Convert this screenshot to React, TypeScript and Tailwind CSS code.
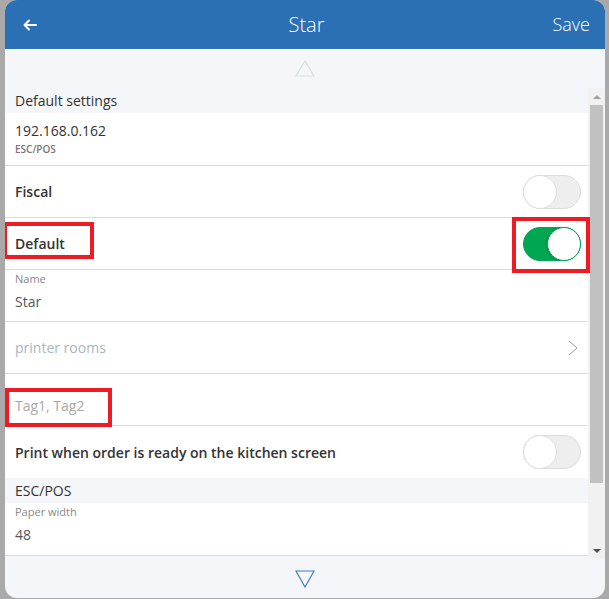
import React, { useState } from 'react';

interface ToggleProps {
  on: boolean;
  onChange: () => void;
}

function Toggle({ on, onChange }: ToggleProps) {
  return (
    <button
      onClick={onChange}
      className={`relative w-[58px] h-[34px] rounded-full border transition-colors ${
        on ? 'bg-[#00a651] border-[#00a651]' : 'bg-[#eeeeee] border-[#dddddd]'
      }`}
    >
      <span
        className={`absolute top-[-1px] w-[34px] h-[34px] rounded-full bg-white border ${
          on ? 'right-[-1px] border-[#00a651] shadow-[-1px_0_2px_rgba(0,0,0,0.15)]' : 'left-[-1px] border-[#dcdcdc]'
        }`}
      />
    </button>
  );
}

// red annotation rectangles drawn over the screenshot
function Marker({ className }: { className: string }) {
  return <div className={`absolute border-4 border-[#ed1c24] pointer-events-none ${className}`} />;
}

export default function App() {
  const [fiscal, setFiscal] = useState(false);
  const [isDefault, setIsDefault] = useState(true);
  const [printReady, setPrintReady] = useState(false);

  const font = { fontFamily: '"Open Sans", "Noto Sans", sans-serif' };

  return (
    <div className="w-[609px] h-[599px] bg-[#a9a9a9] pl-[5px] overflow-hidden" style={font}>
      <div className="relative w-[600px] h-[598px] bg-[#f5f6fa] rounded-[12px] overflow-hidden flex flex-col">
        {/* Header */}
        <div className="h-[49px] bg-[#2b6fb4] flex items-center pl-[18px] pr-[15px] text-white shrink-0">
          <button className="w-[40px] flex items-center">
            <svg width="14" height="12" viewBox="0 0 14 12" fill="none" stroke="white" strokeWidth="2" strokeLinecap="round" strokeLinejoin="round">
              <path d="M13 6H1.5M6 1.5L1.5 6L6 10.5" />
            </svg>
          </button>
          <div className="flex-1 text-center text-[20px] font-light">Star</div>
          <button className="w-[40px] text-right text-[18px] font-light">Save</button>
        </div>

        {/* Up arrow */}
        <div className="h-[39px] flex items-center justify-center shrink-0">
          <svg width="20" height="17" viewBox="0 0 20 17" fill="none" stroke="#d6dee3" strokeWidth="1.2">
            <path d="M10 1L19 16H1Z" />
          </svg>
        </div>

        {/* Scroll area */}
        <div className="h-[471px] flex shrink-0">
          <div className="flex-1 overflow-hidden">
            <div className="h-[25px] flex items-center px-[10px] text-[14px] text-[#333]">Default settings</div>

            <div className="h-[53px] bg-white border-b border-[#d3dfe5] px-[10px] flex flex-col justify-center">
              <div className="text-[14px] font-medium text-[#333] leading-[18px]">192.168.0.162</div>
              <div className="text-[10px] font-semibold text-[#777] leading-[14px] mt-[2px]">ESC/POS</div>
            </div>

            <div className="h-[52px] bg-white border-b border-[#d3dfe5] pl-[10px] pr-[7px] flex items-center justify-between">
              <span className="text-[14px] font-semibold text-[#333]">Fiscal</span>
              <Toggle on={fiscal} onChange={() => setFiscal(!fiscal)} />
            </div>

            <div className="h-[52px] bg-white border-b border-[#d3dfe5] pl-[10px] pr-[7px] flex items-center justify-between">
              <span className="text-[14px] font-semibold text-[#333]">Default</span>
              <Toggle on={isDefault} onChange={() => setIsDefault(!isDefault)} />
            </div>

            <div className="h-[52px] bg-white border-b border-[#d3dfe5] px-[10px] pt-[2px] flex flex-col">
              <div className="text-[11px] text-[#888] leading-[14px]">Name</div>
              <div className="text-[14px] text-[#555] leading-[18px] mt-[7px]">Star</div>
            </div>

            <div className="h-[52px] bg-white border-b border-[#d3dfe5] pl-[10px] pr-[10px] flex items-center justify-between">
              <span className="text-[14px] text-[#a9b6bd]">printer rooms</span>
              <svg width="10" height="16" viewBox="0 0 10 16" fill="none" stroke="#9a9a9a" strokeWidth="1">
                <path d="M1 1L9 8L1 15" />
              </svg>
            </div>

            <div className="h-[52px] bg-white border-b border-[#d3dfe5] px-[10px] flex items-center pt-[12px]">
              <span className="text-[14px] text-[#a8a8a8]">Tag1, Tag2</span>
            </div>

            <div className="h-[52px] bg-white pl-[10px] pr-[7px] flex items-center justify-between">
              <span className="text-[14px] font-semibold text-[#333]">Print when order is ready on the kitchen screen</span>
              <Toggle on={printReady} onChange={() => setPrintReady(!printReady)} />
            </div>

            <div className="h-[25px] flex items-center px-[10px] text-[14px] text-[#333]">ESC/POS</div>

            <div className="h-[53px] bg-white border-b border-[#d3dfe5] px-[10px] pt-[2px] flex flex-col">
              <div className="text-[11px] text-[#888] leading-[14px]">Paper width</div>
              <div className="text-[14px] text-[#555] leading-[18px] mt-[7px]">48</div>
            </div>
          </div>

          {/* Scrollbar */}
          <div className="w-[17px] bg-[#f1f1f1] flex flex-col items-center">
            <div className="h-[17px] flex items-center justify-center">
              <div className="w-0 h-0 border-l-[4px] border-r-[4px] border-b-[4px] border-l-transparent border-r-transparent border-b-[#a3a3a3]" />
            </div>
            <div className="w-[13px] h-[378px] bg-[#c1c1c1]" />
            <div className="flex-1" />
            <div className="h-[17px] flex items-center justify-center">
              <div className="w-0 h-0 border-l-[4px] border-r-[4px] border-t-[4px] border-l-transparent border-r-transparent border-t-[#505050]" />
            </div>
          </div>
        </div>

        {/* Down arrow */}
        <div className="flex-1 flex items-center justify-center">
          <svg width="20" height="18" viewBox="0 0 20 18" fill="none" stroke="#3d7fc4" strokeWidth="1.2">
            <path d="M1 1H19L10 17Z" />
          </svg>
        </div>

        <Marker className="left-[-2px] top-[222px] w-[91px] h-[37px]" />
        <Marker className="left-[507px] top-[217px] w-[78px] h-[56px]" />
        <Marker className="left-[0px] top-[388px] w-[107px] h-[39px]" />
      </div>
    </div>
  );
}
